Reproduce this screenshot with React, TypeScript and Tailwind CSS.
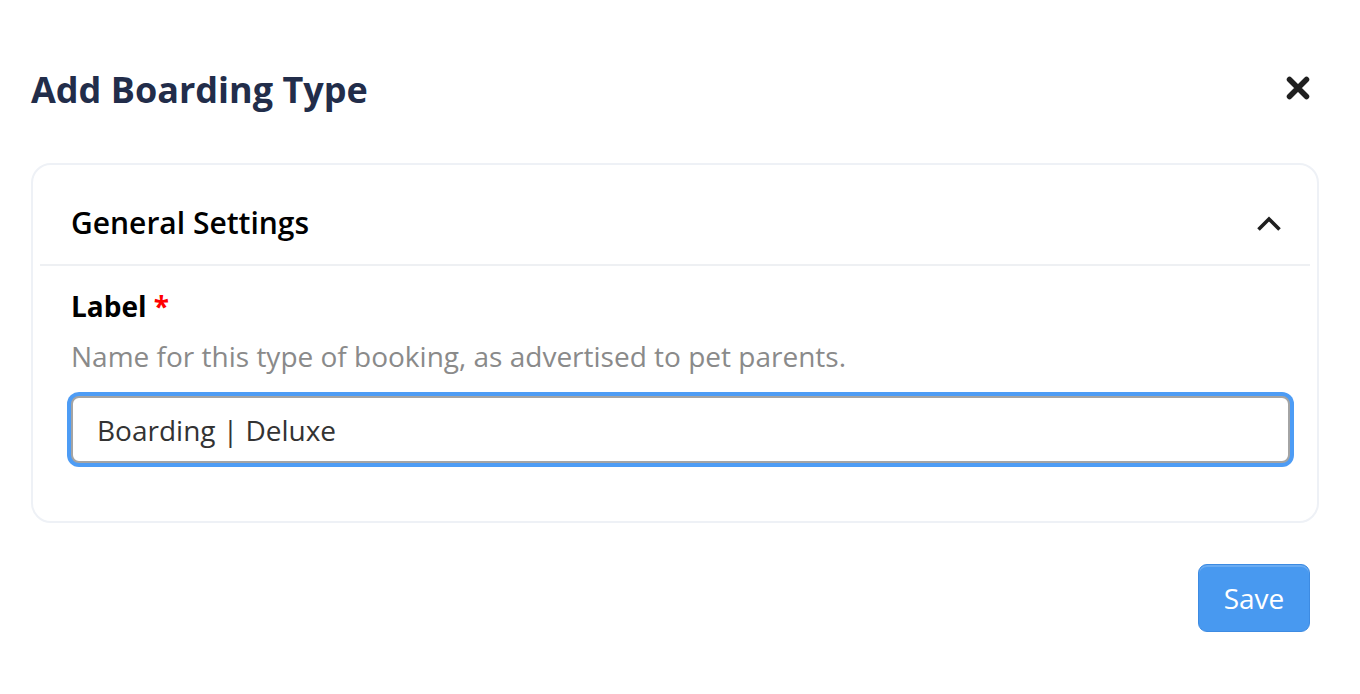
import React, { useEffect, useRef, useState } from "react";

function CloseIcon() {
  return (
    <svg width="24" height="24" viewBox="0 0 24 24" aria-hidden>
      <path d="M3.5 3.5 L20.5 20.5 M20.5 3.5 L3.5 20.5" stroke="#1f1f1f" strokeWidth="5.5" strokeLinecap="round" />
    </svg>
  );
}

function ChevronUp() {
  return (
    <svg width="26" height="18" viewBox="0 0 26 18" aria-hidden>
      <path d="M2.5 15.5 L13 5 L23.5 15.5" fill="none" stroke="#1f1f1f" strokeWidth="3.6" />
    </svg>
  );
}

export default function App() {
  const [value, setValue] = useState("Boarding | Deluxe");
  const inputRef = useRef<HTMLInputElement>(null);

  useEffect(() => {
    const el = inputRef.current;
    if (el) {
      el.focus();
      el.setSelectionRange(el.value.length, el.value.length);
    }
  }, []);

  return (
    <div className="min-h-screen bg-white font-['Open_Sans',sans-serif] pl-[31px] pr-[41px] pt-[66px]">
      <div className="flex items-center justify-between pr-[9px]">
        <h1 className="text-[36px] font-bold leading-[48px] text-[#222d4a]">Add Boarding Type</h1>
        <button type="button" className="-mt-[4px] flex items-center">
          <CloseIcon />
        </button>
      </div>

      <div className="mt-[49px] rounded-[20px] border-2 border-[#eef1f6] px-[7px] pb-[58px]">
        <div className="flex items-center justify-between border-b-2 border-[#eef0f3] pl-[31px] pr-[28px] pt-[38px] pb-[21px]">
          <h2 className="text-[30px] font-semibold leading-[40px] text-black">General Settings</h2>
          <ChevronUp />
        </div>
        <div className="pl-[31px] pr-[20px] pt-[21px]">
          <label className="block text-[28px] font-bold leading-[38px] text-black">
            Label <span className="text-[#ff0000]">*</span>
          </label>
          <p className="mt-[12px] text-[28px] leading-[38px] text-[#8a8a8a]">
            Name for this type of booking, as advertised to pet parents.
          </p>
          <input
            ref={inputRef}
            value={value}
            onChange={(e) => setValue(e.target.value)}
            className="mt-[21px] block h-[67px] w-full rounded-[8px] border-2 border-[#a4a4a4] bg-white px-[24px] text-[28px] text-[#333] caret-[#222] shadow-[0_0_0_4px_#4d9cf5] focus:outline-none"
          />
        </div>
      </div>

      <div className="mt-[41px] flex justify-end pr-[9px]">
        <button
          type="button"
          className="h-[68px] w-[112px] rounded-[9px] border border-[#3d8be2] bg-[#4899f0] text-[28px] text-white shadow-[inset_0_2px_0_rgba(255,255,255,0.18)]"
        >
          Save
        </button>
      </div>
    </div>
  );
}
